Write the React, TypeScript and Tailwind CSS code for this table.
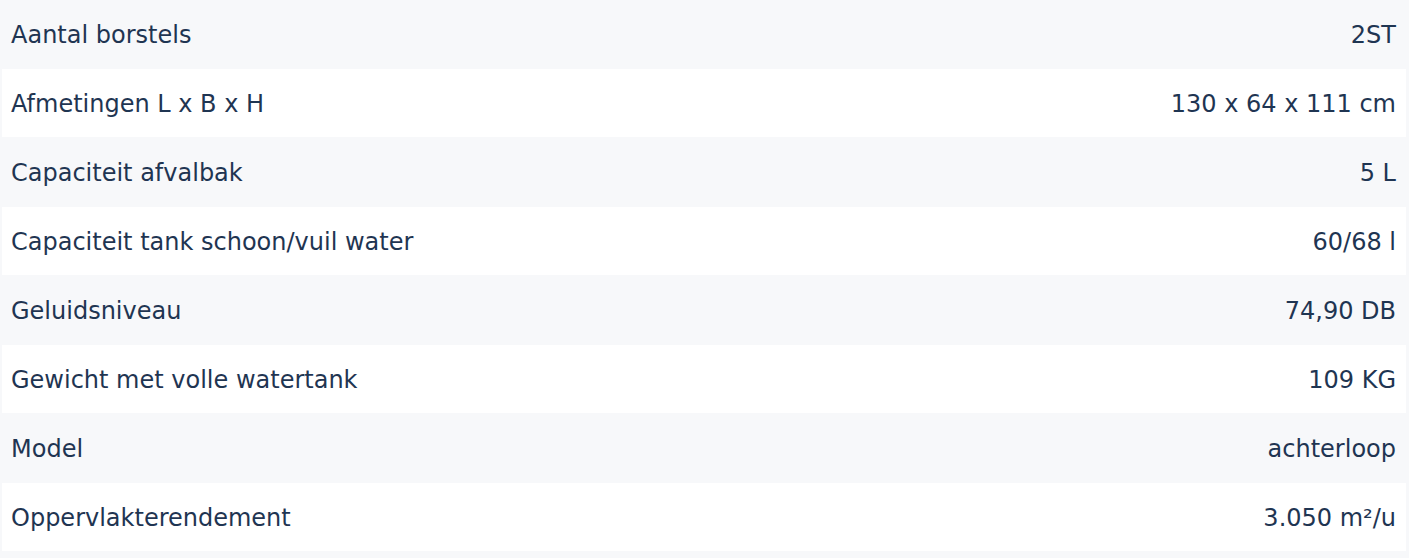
const specs = [
  { label: 'Aantal borstels', value: '2ST' },
  { label: 'Afmetingen L x B x H', value: '130 x 64 x 111 cm' },
  { label: 'Capaciteit afvalbak', value: '5 L' },
  { label: 'Capaciteit tank schoon/vuil water', value: '60/68 l' },
  { label: 'Geluidsniveau', value: '74,90 DB' },
  { label: 'Gewicht met volle watertank', value: '109 KG' },
  { label: 'Model', value: 'achterloop' },
  { label: 'Oppervlakterendement', value: '3.050 m²/u' },
];

export default function App() {
  return (
    <div className="min-h-[558px] w-full bg-[#f7f8fa] pl-[2px] pr-[3px] font-['DejaVu_Sans',sans-serif] text-[24px] text-[#1f3552]">
      <div className="flex flex-col gap-px">
        {specs.map((row, i) => (
          <div
            key={row.label}
            className={`flex h-[68px] items-center justify-between pl-[9px] pr-[10px] pt-[2px] ${i % 2 === 1 ? 'bg-white' : ''}`}
          >
            <span>{row.label}</span>
            <span>{row.value}</span>
          </div>
        ))}
      </div>
    </div>
  );
}
